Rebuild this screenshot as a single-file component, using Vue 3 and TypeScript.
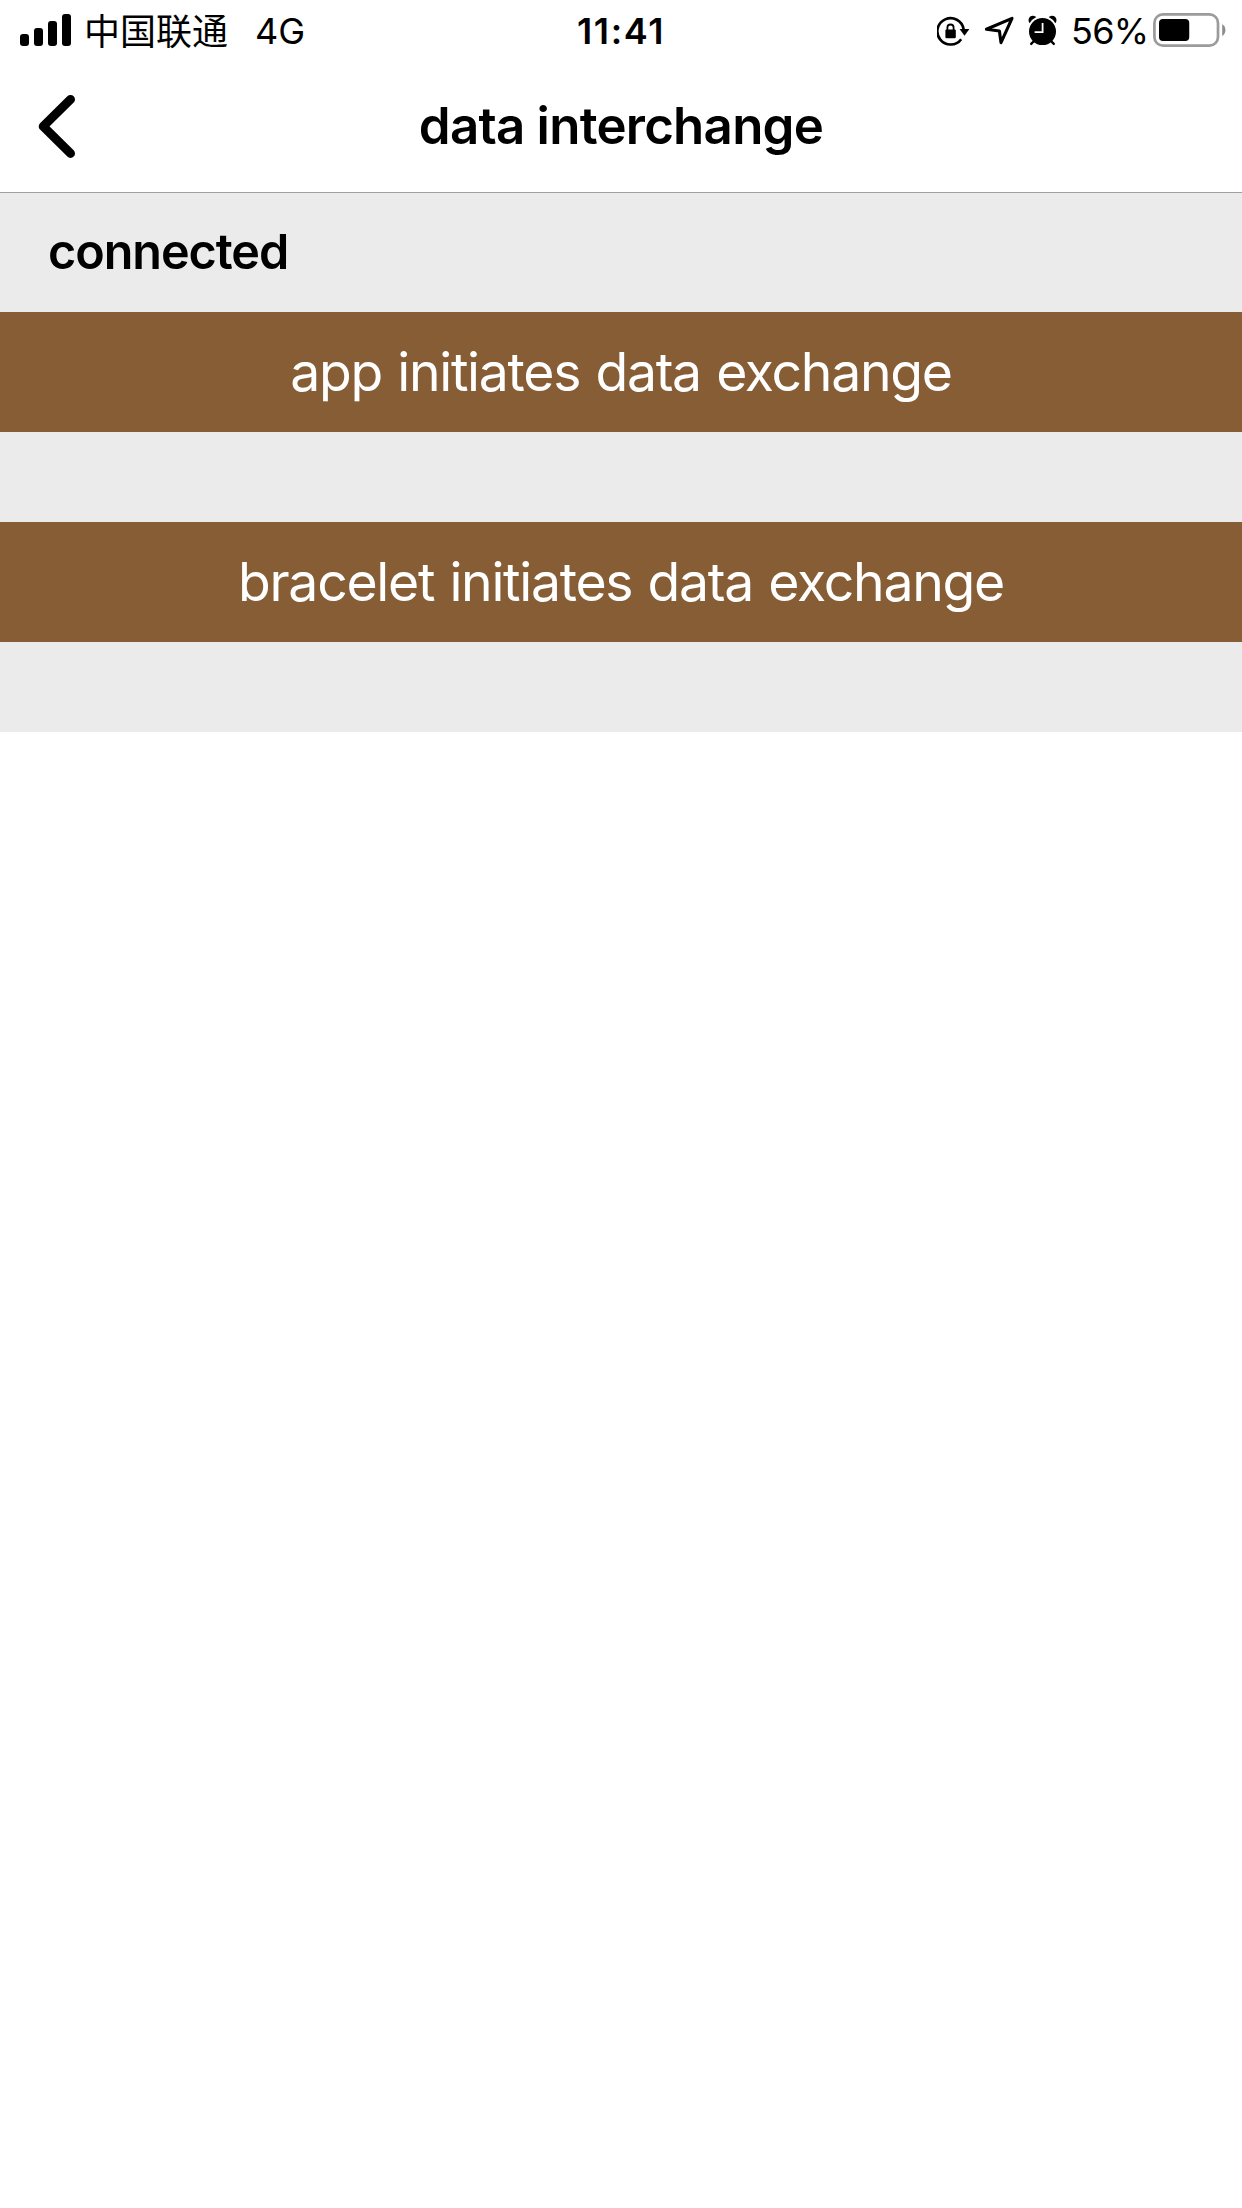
<script setup lang="ts">
interface Action {
  id: string
  label: string
}

const carrier = '中国联通'
const network = '4G'
const time = '11:41'
const battery = 56
const title = 'data interchange'
const connection = 'connected'
const actions: Action[] = [
  { id: 'app', label: 'app initiates data exchange' },
  { id: 'bracelet', label: 'bracelet initiates data exchange' },
]
</script>

<template>
  <div class="screen">
    <header class="status-bar">
      <div class="status-left">
        <svg class="signal" width="51" height="32" viewBox="0 0 51 32">
          <rect x="0" y="20" width="9" height="12" rx="3" />
          <rect x="14" y="14" width="9" height="18" rx="3" />
          <rect x="28" y="7" width="9" height="25" rx="3" />
          <rect x="42" y="0" width="9" height="32" rx="3" />
        </svg>
        <span class="carrier">{{ carrier }}</span>
        <span class="network">{{ network }}</span>
      </div>
      <span class="time">{{ time }}</span>
      <div class="status-right">
        <svg class="indicators" width="134" height="60" viewBox="0 0 134 60">
          <!-- rotation lock -->
          <path d="M26.6 29.2A13.2 13.2 0 1 0 24.2 39.2" fill="none" stroke="#000" stroke-width="2.6" />
          <path d="M10.4 31v-3.4a3.1 3.1 0 0 1 6.2 0V31" fill="none" stroke="#000" stroke-width="1.8" />
          <rect x="8.4" y="29.4" width="10.4" height="8.8" rx="1.2" />
          <path d="M22.6 29h9.8l-4.9 6.8z" />
          <!-- location -->
          <path d="M49.4 29.2L75 18.4L64 42.6L62.4 31Z" fill="none" stroke="#000" stroke-width="3.1" stroke-linejoin="round" />
          <!-- alarm -->
          <circle cx="105.5" cy="31.6" r="13.5" />
          <path d="M92.7 23.2a4.3 4.3 0 0 1 6.6-6.1a16 16 0 0 0-6.6 6.1z" />
          <path d="M118.3 23.2a4.3 4.3 0 0 0-6.6-6.1a16 16 0 0 1 6.6 6.1z" />
          <path d="M97.5 40.5l-3.3 3.4M113.5 40.5l3.3 3.4" stroke="#000" stroke-width="2.4" stroke-linecap="round" />
          <path d="M105.6 23v9.2h-8" fill="none" stroke="#fff" stroke-width="1.8" />
        </svg>
        <span class="percent">{{ battery }}%</span>
        <svg class="battery" width="74" height="34" viewBox="0 0 74 34">
          <rect x="1.4" y="1.4" width="63.6" height="31.2" rx="8.5" fill="none" stroke="#9b9b9b" stroke-width="2.7" />
          <rect x="6" y="6" :width="(battery / 100) * 54" height="22" rx="4" />
          <path d="M69.2 11v12a7.2 7.2 0 0 0 0-12z" fill="#8c8c8c" />
        </svg>
      </div>
    </header>

    <nav class="nav-bar">
      <button class="back" aria-label="Back">
        <svg width="38" height="64" viewBox="0 0 38 64">
          <path d="M32.5 5.4L5.2 32.4L32.5 59.4" fill="none" stroke="#000" stroke-width="9" stroke-linecap="round" stroke-linejoin="round" />
        </svg>
      </button>
      <h1 class="title">{{ title }}</h1>
    </nav>

    <main class="content">
      <p class="connection">{{ connection }}</p>
      <button v-for="action in actions" :key="action.id" class="action">
        {{ action.label }}
      </button>
    </main>
  </div>
</template>

<style>
body {
  margin: 0;
  background: #fff;
}
</style>

<style scoped>
.screen {
  width: 1242px;
  min-height: 2208px;
  background: #fff;
  color: #000;
  font-family: Inter, 'Noto Sans CJK SC', sans-serif;
}

.status-bar {
  display: grid;
  grid-template-columns: 1fr auto 1fr;
  height: 60px;
  font-size: 36px;
  line-height: 62px;
  white-space: nowrap;
}

.status-left {
  display: flex;
  padding-left: 20px;
}

.signal {
  margin-top: 14px;
}

.carrier {
  width: 144px;
  margin-left: 13px;
  font-family: 'Noto Sans CJK SC', sans-serif;
  font-weight: 400;
  line-height: 59px;
}

.network {
  margin-left: 27px;
}

.time {
  font-weight: 600;
  letter-spacing: 1.6px;
}

.status-right {
  display: flex;
  justify-content: flex-end;
  padding-right: 15px;
}

.indicators {
  flex: none;
}

.percent {
  width: 82px;
  letter-spacing: -0.7px;
}

.battery {
  flex: none;
  margin-top: 13px;
}

.nav-bar {
  display: grid;
  grid-template-columns: 120px 1fr 120px;
  box-sizing: border-box;
  height: 133px;
  border-bottom: 1px solid #a0a0a0;
}

.back {
  display: flex;
  padding: 34px 0 0 38px;
  border: 0;
  background: none;
}

.title {
  margin: 0;
  text-align: center;
  font-size: 51px;
  font-weight: 600;
  line-height: 132px;
  letter-spacing: -0.75px;
}

.content {
  display: flex;
  flex-direction: column;
  padding-bottom: 90px;
  background: #ebebeb;
}

.connection {
  margin: 0;
  padding-left: 48px;
  height: 119px;
  font-size: 48.5px;
  font-weight: 600;
  line-height: 118px;
  letter-spacing: -1.05px;
}

.action {
  height: 120px;
  margin: 0;
  padding: 0;
  border: 0;
  background: #865d35;
  color: #fff;
  font-family: inherit;
  font-size: 53.5px;
  line-height: 120px;
  text-align: center;
  letter-spacing: -1.28px;
  word-spacing: 1.5px;
}

.action + .action {
  margin-top: 90px;
}
</style>
